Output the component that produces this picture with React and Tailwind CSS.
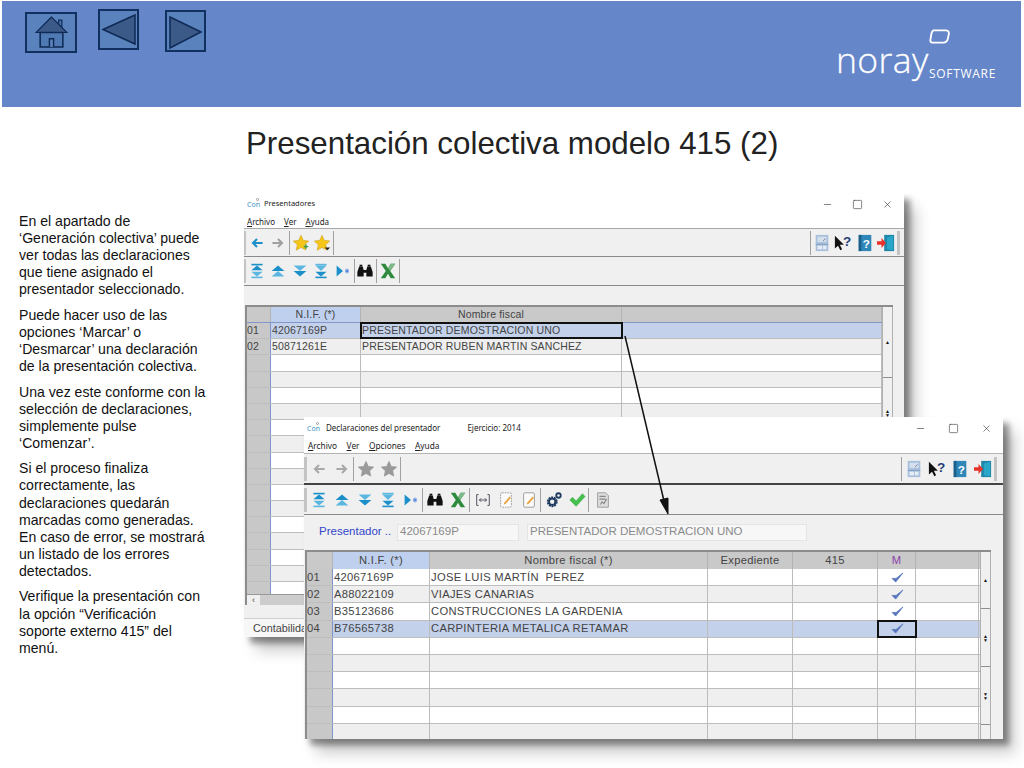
// App.jsx
// Slide: "Presentación colectiva modelo 415 (2)" with two overlapping app windows
import { Minus, Square, X } from 'lucide-react';

const paragraphs = [
  ['En el apartado de', '‘Generación colectiva’ puede', 'ver todas las declaraciones', 'que tiene asignado el', 'presentador seleccionado.'],
  ['Puede hacer uso de las', 'opciones ‘Marcar’ o', '‘Desmarcar’ una declaración', 'de la presentación colectiva.'],
  ['Una vez este conforme con la', 'selección de declaraciones,', 'simplemente pulse', '‘Comenzar’.'],
  ['Si el proceso finaliza', 'correctamente, las', 'declaraciones quedarán', 'marcadas como generadas.', 'En caso de error, se mostrará', 'un listado de los errores', 'detectados.'],
  ['Verifique la presentación con', 'la opción “Verificación', 'soporte externo 415” del', 'menú.'],
];

const Ico = ({ children, small }) => (
  <svg viewBox="0 0 20 20" className={small ? 'w-[16px] h-[16px]' : 'w-[18px] h-[18px]'}>{children}</svg>
);

// blue navigation glyphs
const blue = '#1b8fc9';
const light = '#5bb6e0';
const Nav = ({ d }) => (
  <Ico small>
    {d === 'first' && <><rect x="3" y="1" width="14" height="2" fill={blue} /><rect x="3" y="17" width="14" height="2" fill={light} /><path d="M10 3l7 6H3z" fill={blue} /><path d="M10 17l7-6H3z" fill={light} /></>}
    {d === 'prev' && <><path d="M10 3l8 7H2z" fill={blue} /><path d="M10 10l8 7H2z" fill={light} /></>}
    {d === 'next' && <><path d="M10 10L2 3h16z" fill={light} /><path d="M10 17L2 10h16z" fill={blue} /></>}
    {d === 'last' && <><rect x="3" y="1" width="14" height="2" fill={light} /><rect x="3" y="17" width="14" height="2" fill={blue} /><path d="M10 10L3 3h14z" fill={light} /><path d="M10 17l-7-6h14z" fill={blue} /></>}
    {d === 'jump' && <><path d="M2 3l8 7-8 7z" fill={blue} /><path d="M15 7v6M12.500 8.500l5 3M17.500 8.500l-5 3" stroke="#4a7fe0" strokeWidth="1.200" /></>}
  </Ico>
);

const ArrowIcon = ({ dir, color }) => (
  <Ico small>
    <path d={dir === 'left' ? 'M17 10H6M10 5l-5 5 5 5' : 'M3 10h11M10 5l5 5-5 5'} fill="none" stroke={color} strokeWidth="2.600" />
  </Ico>
);

const StarIcon = ({ color = '#f5c518', edge = '#c99a10', badge }) => (
  <Ico>
    <path d="M10 1.500l2.600 5.600 6 .7-4.500 4.100 1.200 6L10 15l-5.300 3 1.200-6L1.400 7.800l6-.7z" fill={color} stroke={edge} strokeWidth=".6" />
    {badge === 'plus' && <path d="M13 14h5M15.500 11.500v5" stroke="#3c9a4a" strokeWidth="1.600" />}
    {badge === 'down' && <path d="M13 15h6l-3 3z" fill="#222" />}
  </Ico>
);

const Binoculars = () => (
  <Ico>
    <path d="M3.500 5h4l1 4v7H1.500v-5zM12.500 5h4l2 6v5h-7V9zM8.500 9h3v3h-3z" fill="#111" />
    <rect x="4" y="3" width="3" height="2" fill="#111" />
    <rect x="13" y="3" width="3" height="2" fill="#111" />
  </Ico>
);

const ExcelX = () => (
  <Ico>
    <path d="M2 2h5l3 5 3-5h5l-5.500 8L18 18h-5l-3-5-3 5H2l5.500-8z" fill="#2f8a3e" />
    <path d="M10 7l3-5h5l-5.500 8z" fill="#7fb98a" />
  </Ico>
);

const Bracket = () => (
  <Ico>
    <path d="M5 4H3v12h2M15 4h2v12h-2M6 10h8M6 10l2-2M6 10l2 2M14 10l-2-2M14 10l-2 2" fill="none" stroke="#445" strokeWidth="1" />
  </Ico>
);

const Note = ({ dashed }) => (
  <Ico>
    <rect x="4" y="2" width="12" height="16" rx="1.500" fill="#fafafa" stroke="#999" strokeDasharray={dashed ? '2 1' : undefined} />
    <path d="M8 13l6-7 1.500 1.500-6 7-2 .5z" fill="#e8a33c" />
  </Ico>
);

const Gears = () => (
  <Ico>
    <circle cx="8" cy="12" r="4.500" fill="none" stroke="#1f3a5f" strokeWidth="3" strokeDasharray="2 .8" />
    <circle cx="8" cy="12" r="3.500" fill="none" stroke="#1f3a5f" strokeWidth="2" />
    <circle cx="15" cy="5" r="2.500" fill="none" stroke="#1f3a5f" strokeWidth="2" />
  </Ico>
);

const GreenCheck = () => (
  <Ico>
    <path d="M2 10l3-3 4 4 7-8 3 3-10 11z" fill="#45c04a" stroke="#2a9a35" strokeWidth=".5" />
  </Ico>
);

const DocGrey = () => (
  <Ico>
    <path d="M4 2h9l3 3v13H4z" fill="#ddd" stroke="#999" />
    <path d="M6 6h7M6 9h7M7 15l2-3 2 2 3-5" fill="none" stroke="#888" strokeWidth="1.200" />
  </Ico>
);

const SaveIcon = () => (
  <Ico>
    <rect x="3" y="1" width="14" height="18" fill="#a9c0dc" />
    <rect x="5" y="3" width="10" height="6" fill="#d3dfec" />
    <path d="M11 8l3-3" stroke="#6f7f92" />
    <rect x="3" y="11" width="14" height="1" fill="#7f9cc0" />
    <rect x="5" y="13" width="5" height="4" fill="#e6edf5" />
    <rect x="11" y="13" width="4" height="4" fill="#e6edf5" />
  </Ico>
);

const HelpCursor = () => (
  <Ico>
    <path d="M1 2v14l3.500-3 2.500 5 2-1-2.500-5H11z" fill="#111" />
    <text x="10" y="13" fontSize="15" fontWeight="700" fill="#1f3f7a" fontFamily="Liberation Sans">?</text>
  </Ico>
);

const BookIcon = () => (
  <Ico>
    <rect x="3" y="1" width="14" height="18" fill="#2f86b8" />
    <rect x="3" y="1" width="3" height="18" fill="#1c5f88" />
    <text x="7.500" y="15" fontSize="13" fontWeight="700" fill="#fff" fontFamily="Liberation Sans">?</text>
  </Ico>
);

const ExitIcon = () => (
  <Ico>
    <path d="M8 1h11v18H8z" fill="#1e86a8" />
    <path d="M11 4l7-2v16l-7-1z" fill="#2aa6c8" />
    <path d="M0 8h5V4.500l5 5.500-5 5.500V12H0z" fill="#e8312a" />
  </Ico>
);

const Tick = () => (
  <svg viewBox="0 0 14 12" className="w-[13px] h-[11px] mx-auto">
    <path d="M1 7l4 4L13 1 5.500 7z" fill="#5674bb" stroke="#5674bb" strokeWidth=".8" />
  </svg>
);

const Btn = ({ children, wide }) => (
  <span className={`${wide ? 'w-[23px]' : 'w-[21.500px]'} h-full flex items-center justify-center shrink-0`}>{children}</span>
);
const Sep = () => <span className="w-[1px] h-[24px] bg-[#a0a0a0] shrink-0" />;
const Grip = ({ thin }) => <span className={`${thin ? 'w-[2px]' : 'w-[3px]'} h-[24px] bg-[#c4c4c4] shrink-0`} />;

const ConLogo = ({ w }) => (
  <span className={`relative text-[7px] leading-none text-[#3a8fc0] ${w} font-['Noto_Sans',sans-serif]`}>
    Con
    <span className="absolute left-[9px] -top-[3px] w-[3px] h-[3px] rounded-full border border-[#999]" />
  </span>
);

const Underlined = ({ label }) => (
  <span><span className="underline">{label[0]}</span>{label.slice(1)}</span>
);

// window chrome controls, spaced by the parent's button width
const Controls = ({ w, pad }) => (
  <div className={`ml-auto flex items-center text-[#333] ${pad}`}>
    {[Minus, Square, X].map((Icon, i) => (
      <span key={i} className={`${w} flex justify-center`}><Icon size={11} strokeWidth={1.3} /></span>
    ))}
  </div>
);

const Cell = ({ children, sel, tag, head, blueHead }) => (
  <div className={`flex items-center overflow-hidden whitespace-pre border-r ${head ? 'justify-center border-[#b4b4b4]' : tag ? 'bg-[#c8c8c8] border-[#7f95cb]' : 'pl-[1px] border-[#bcbcbc]'} ${blueHead ? 'bg-[#bfd0ee]' : ''} ${sel ? 'relative z-10 outline-2 outline-[#111] -outline-offset-1' : ''}`}>
    {children}
  </div>
);

// one table row; cols is the full grid-cols class of the table
const Row = ({ cols, height, cells, index, active, selCol }) => {
  const bg = active ? 'bg-[#c3d1ea]' : index % 2 ? 'bg-[#efefef]' : 'bg-white';
  return (
    <div className={`grid ${cols} ${height} ${bg} border-b border-[#bdbdbd]`}>
      {cells.map((c, i) => (
        <Cell key={i} tag={i === 0} sel={selCol === i}>{c}</Cell>
      ))}
    </div>
  );
};

// stops: section height plus the little arrows stacked in its middle
const VScroll = ({ stops }) => (
  <div className="w-[11px] shrink-0 bg-[#f0f0f0] border-x border-[#b0b0b0] flex flex-col">
    {stops.map((s, i) => (
      <div key={i} className={`${s.h} shrink-0 flex flex-col items-center justify-center text-[5px] leading-[4px] text-[#111] border-b border-[#8f8f8f]`}>
        {s.t.map((g, j) => <span key={j}>{g}</span>)}
      </div>
    ))}
  </div>
);

const grid1Rows = [
  ['01', '42067169P', 'PRESENTADOR DEMOSTRACION UNO', ''],
  ['02', '50871261E', 'PRESENTADOR RUBEN MARTIN SANCHEZ', ''],
  ...Array.from({ length: 15 }, () => ['', '', '', '']),
];

const grid2Rows = [
  ['01', '42067169P', 'JOSE LUIS MARTÍN  PEREZ', '', '', <Tick />, ''],
  ['02', 'A88022109', 'VIAJES CANARIAS', '', '', <Tick />, ''],
  ['03', 'B35123686', 'CONSTRUCCIONES LA GARDENIA', '', '', <Tick />, ''],
  ['04', 'B76565738', 'CARPINTERIA METALICA RETAMAR', '', '', <Tick />, ''],
  ...Array.from({ length: 6 }, () => ['', '', '', '', '', '', '']),
];

function PresentadoresWindow() {
  const cols = 'grid-cols-[24px_90px_261px_260px]';
  return (
    <div className="absolute left-[244px] top-[86px] w-[660px] h-[444px] bg-[#f0f0f0] flex flex-col shadow-[6px_6px_6px_rgba(0,0,0,0.4),12px_14px_14px_rgba(0,0,0,0.2)] font-['Noto_Sans',sans-serif]">
      <div className="bg-white h-[35px] shrink-0 flex flex-col">
        <div className="h-[22px] flex items-center pl-[3px] text-[7.500px] text-[#222]">
          <ConLogo w="w-[17px]" />
          <span>Presentadores</span>
          <Controls w="w-[30px]" pad="pr-[2px]" />
        </div>
        <div className="h-[13px] flex items-center pl-[3px] gap-[9px] text-[8px] text-[#222]">
          <Underlined label="Archivo" /><Underlined label="Ver" /><Underlined label="Ayuda" />
        </div>
      </div>
      <div className="h-[28px] shrink-0 flex items-center border-t border-[#a8a8a8]">
        <Grip thin />
        <Btn><ArrowIcon dir="left" color="#1b8fc9" /></Btn>
        <Btn><ArrowIcon dir="right" color="#a0a0a0" /></Btn>
        <Sep />
        <Btn><StarIcon badge="plus" /></Btn>
        <Btn><StarIcon badge="down" /></Btn>
        <Sep />
        <div className="ml-auto flex items-center h-full pr-[4px]">
          <Sep />
          <Btn><SaveIcon /></Btn>
          <Btn><HelpCursor /></Btn>
          <Btn><BookIcon /></Btn>
          <Btn><ExitIcon /></Btn>
          <Grip />
        </div>
      </div>
      <div className="h-[29px] shrink-0 flex items-center border-t border-[#8a8a8a]">
        <Grip thin />
        <Btn><Nav d="first" /></Btn>
        <Btn><Nav d="prev" /></Btn>
        <Btn><Nav d="next" /></Btn>
        <Btn><Nav d="last" /></Btn>
        <Btn><Nav d="jump" /></Btn>
        <Sep />
        <Btn><Binoculars /></Btn>
        <Sep />
        <Btn><ExcelX /></Btn>
        <Sep />
      </div>
      <div className="h-[20px] shrink-0 border-t border-[#8a8a8a]" />
      <div className="ml-[1px] w-[648px] h-[300px] shrink-0 border-t-2 border-l-2 border-[#8c8c8c] font-['Liberation_Sans',sans-serif] text-[10.500px] tracking-[0.15px] text-[#444] overflow-hidden flex flex-col">
        <div className="flex h-[287px]">
          <div className="flex-1 overflow-hidden">
            <div className={`grid ${cols} h-[16px] bg-[#c9c9c9] border-b border-[#8296c8]`}>
              <Cell head />
              <Cell head blueHead>N.I.F. (*)</Cell>
              <Cell head>Nombre fiscal</Cell>
              <Cell head />
            </div>
            {grid1Rows.map((r, i) => (
              <Row key={i} cols={cols} height="h-[16.2px]" cells={r} index={i} active={i === 0} selCol={i === 0 ? 2 : undefined} />
            ))}
          </div>
          <VScroll stops={[{ h: 'h-[71px]', t: ['▲'] }, { h: 'h-[70px]', t: ['▲', '▼'] }]} />
        </div>
        <div className="h-[13px] flex items-center bg-[#f0f0f0] border-y border-[#999]">
          <span className="w-[13px] text-center text-[9px]">‹</span>
          <span className="w-[500px] h-full bg-[#cdcdcd]" />
        </div>
      </div>
      <div className="h-[13px] shrink-0" />
      <div className="h-[19px] shrink-0 bg-[#f7f7f7] border-t border-[#d0d0d0] flex items-center pl-[9px] font-['Liberation_Sans',sans-serif] text-[10.800px] text-[#444]">
        Contabilida
      </div>
    </div>
  );
}

function DeclaracionesWindow() {
  const cols = 'grid-cols-[26px_97px_278px_85px_85px_38px_63px]';
  return (
    <div className="absolute left-[304px] top-[310px] z-10 w-[699px] h-[322px] bg-[#f0f0f0] flex flex-col shadow-[6px_6px_6px_rgba(0,0,0,0.4),12px_14px_14px_rgba(0,0,0,0.2)] font-['Noto_Sans',sans-serif]">
      <div className="bg-white h-[36px] shrink-0 flex flex-col">
        <div className="h-[22px] flex items-center pl-[3px] text-[8px] text-[#222]">
          <ConLogo w="w-[18px]" />
          <span className="ml-[1px]">Declaraciones del presentador</span>
          <span className="ml-[27px]">Ejercicio: 2014</span>
          <Controls w="w-[33px]" />
        </div>
        <div className="h-[14px] flex items-center pl-[4px] gap-[9.500px] text-[8.300px] text-[#222]">
          <Underlined label="Archivo" /><Underlined label="Ver" /><Underlined label="Opciones" /><Underlined label="Ayuda" />
        </div>
      </div>
      <div className="h-[30px] shrink-0 flex items-center border-t border-[#b4b4b4]">
        <Grip />
        <Btn wide><ArrowIcon dir="left" color="#a8a8a8" /></Btn>
        <Btn wide><ArrowIcon dir="right" color="#a8a8a8" /></Btn>
        <Sep />
        <Btn wide><StarIcon color="#9a9a9a" edge="#8a8a8a" /></Btn>
        <Btn wide><StarIcon color="#9a9a9a" edge="#8a8a8a" /></Btn>
        <Sep />
        <div className="ml-auto flex items-center h-full pr-[6px]">
          <Sep />
          <Btn wide><SaveIcon /></Btn>
          <Btn wide><HelpCursor /></Btn>
          <Btn wide><BookIcon /></Btn>
          <Btn wide><ExitIcon /></Btn>
          <Grip />
        </div>
      </div>
      <div className="h-[31px] shrink-0 flex items-center border-t-2 border-[#444]">
        <Grip />
        <Btn wide><Nav d="first" /></Btn>
        <Btn wide><Nav d="prev" /></Btn>
        <Btn wide><Nav d="next" /></Btn>
        <Btn wide><Nav d="last" /></Btn>
        <Btn wide><Nav d="jump" /></Btn>
        <Sep />
        <Btn wide><Binoculars /></Btn>
        <Btn wide><ExcelX /></Btn>
        <Sep />
        <span className="ml-[1px]" />
        <Btn wide><Bracket /></Btn>
        <Btn wide><Note dashed /></Btn>
        <Btn wide><Note /></Btn>
        <Sep />
        <span className="ml-[1px]" />
        <Btn wide><Gears /></Btn>
        <Btn wide><GreenCheck /></Btn>
        <Sep />
        <span className="ml-[2px]" />
        <Btn wide><DocGrey /></Btn>
      </div>
      <div className="h-[36px] shrink-0 border-t border-[#8a8a8a] flex items-center pl-[15px] pb-[1px] font-['Liberation_Sans',sans-serif] text-[11.500px]">
        <span className="w-[78px] text-[#3346c8]">Presentador ..</span>
        <span className="w-[122px] h-[17px] bg-[#f7f7f7] border border-[#e4e4e4] flex items-center pl-[2px] text-[#8a8a8a]">42067169P</span>
        <span className="ml-[8px] w-[280px] h-[17px] bg-[#f7f7f7] border border-[#e4e4e4] flex items-center pl-[2px] text-[#8a8a8a]">PRESENTADOR DEMOSTRACION UNO</span>
      </div>
      <div className="ml-[1px] w-[686px] flex-1 min-h-0 border-t-2 border-l-2 border-[#8c8c8c] font-['Liberation_Sans',sans-serif] text-[11.200px] tracking-[0.3px] text-[#444] flex overflow-hidden">
        <div className="flex-1 overflow-hidden">
          <div className={`grid ${cols} h-[17px] bg-[#c9c9c9]`}>
            <Cell head />
            <Cell head blueHead>N.I.F. (*)</Cell>
            <Cell head>Nombre fiscal (*)</Cell>
            <Cell head>Expediente</Cell>
            <Cell head>415</Cell>
            <Cell head><span className="text-[#8a3fa8]">M</span></Cell>
            <Cell head />
          </div>
          {grid2Rows.map((r, i) => (
            <Row key={i} cols={cols} height="h-[17.2px]" cells={r} index={i} active={i === 3} selCol={i === 3 ? 5 : undefined} />
          ))}
        </div>
        <VScroll stops={[
          { h: 'h-[57px]', t: ['▲'] },
          { h: 'h-[58px]', t: ['▲', '▼'] },
          { h: 'h-[58px]', t: ['▼', '▼'] },
        ]} />
      </div>
    </div>
  );
}

export default function App() {
  return (
    <div className="w-[1024px] h-[768px] bg-white overflow-hidden flex flex-col font-['Liberation_Sans',sans-serif]">
      <header className="mt-[1px] ml-[2px] mr-[3px] h-[106px] shrink-0 bg-[#6586c9] flex items-start text-white">
        <div className="flex items-start">
          <div className="ml-[23px] mt-[11px] w-[52px] h-[41px] bg-[#5a83bd] border-2 border-[#12305f] flex items-center justify-center">
            <svg viewBox="0 0 32 32" className="w-[33px] h-[33px]">
              <path d="M23 4h3v7l-3-2z" fill="#4f79b3" stroke="#0e2a55" strokeWidth="1.200" />
              <path d="M16 1L1 16h30z" fill="#3c5a88" stroke="#0e2a55" strokeWidth="1.200" />
              <path d="M5 16h22v14H5z" fill="#4f79b3" stroke="#0e2a55" strokeWidth="1.500" />
              <path d="M14 30v-8h4v8" fill="#5a83bd" stroke="#0e2a55" strokeWidth="1.400" />
            </svg>
          </div>
          <div className="ml-[21px] mt-[8px] w-[41px] h-[41px] bg-[#5a83bd] border-2 border-[#12305f]">
            <svg viewBox="0 0 37 37" className="w-full h-full">
              <path d="M3 18.500L35 4v29z" fill="#3c5a88" stroke="#0e2a55" strokeWidth="1.500" />
            </svg>
          </div>
          <div className="ml-[26px] mt-[9px] w-[41px] h-[42px] bg-[#5a83bd] border-2 border-[#12305f]">
            <svg viewBox="0 0 37 38" className="w-full h-full">
              <path d="M34 20L3 5v31z" fill="#3c5a88" stroke="#0e2a55" strokeWidth="1.500" />
            </svg>
          </div>
        </div>
        <div className="relative ml-[632px] mt-[28px] w-[160px] h-[55px]">
          <svg viewBox="0 0 22 16" className="absolute left-[91px] top-0 w-[21px] h-[15px]">
            <path d="M5 1.500h13c2.500 0 3.500 2 2.800 4.500l-.8 4c-.6 3-2 4.500-5 4.500H3.500C1.500 14.500.8 13 1.500 10.500l.8-5C2.800 2.800 3.500 1.500 5 1.500z" fill="none" stroke="#fff" strokeWidth="2" />
          </svg>
          <span className="absolute -left-[2px] top-[8px] font-['Open_Sans',sans-serif] font-light text-[35.500px] leading-[44px] tracking-[0.4px] [-webkit-text-stroke:0.3px_white]">noray</span>
          <span className="absolute left-[91px] top-[38px] font-['Open_Sans',sans-serif] text-[12px] leading-[14px] tracking-[0.7px]">SOFTWARE</span>
        </div>
      </header>

      <main className="relative flex-1 flex">
        <aside className="w-[244px] shrink-0 pl-[19px] pt-[106px] text-[14.100px] leading-[17.100px] text-[#111] flex flex-col gap-[8.400px]">
          {paragraphs.map((lines, i) => (
            <p key={i}>
              {lines.map(l => <span key={l} className="block whitespace-nowrap">{l}</span>)}
            </p>
          ))}
        </aside>
        <div className="flex-1 pl-[2px] pt-[19px]">
          <h1 className="text-[31.300px] leading-[36px] text-[#222] whitespace-nowrap">Presentación colectiva modelo 415 (2)</h1>
        </div>
        <PresentadoresWindow />
        <DeclaracionesWindow />
        <svg viewBox="0 0 60 190" className="absolute left-[620px] top-[226px] w-[60px] h-[190px] z-20">
          <path d="M5 3L44 168" stroke="#111" strokeWidth="1.500" />
          <path d="M48 181l-8-14 8-2z" fill="#111" stroke="#111" />
        </svg>
      </main>
    </div>
  );
}
